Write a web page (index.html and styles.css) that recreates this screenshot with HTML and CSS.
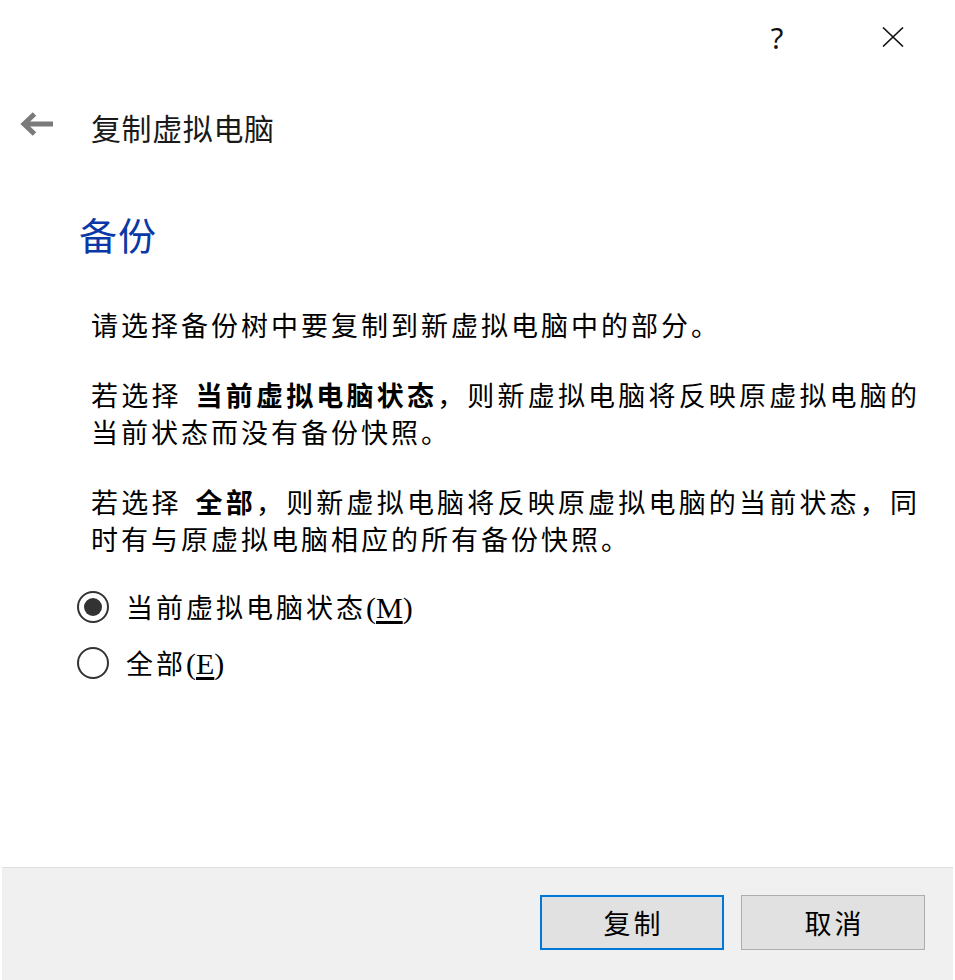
FILE: index.html
```html
<!DOCTYPE html>
<html lang="zh-CN">
<head>
<meta charset="utf-8">
<title>复制虚拟电脑</title>
<link rel="stylesheet" href="styles.css">
</head>
<body>
<div class="window">
  <div class="titlebar">
    <button class="cap-btn help" type="button">?</button>
    <button class="cap-btn close" type="button" aria-label="关闭">
      <svg width="22" height="20" viewBox="0 0 22 20"><path d="M1 0.5 L21 19.5 M21 0.5 L1 19.5" stroke="#111" stroke-width="1.6" fill="none"/></svg>
    </button>
  </div>
  <div class="header">
    <svg class="back" width="34" height="30" viewBox="0 0 34 30"><path d="M7 12 H33" stroke="#7a7a7a" stroke-width="5" fill="none"/><path d="M14.5 2 L4 12 L14.5 22" stroke="#7a7a7a" stroke-width="5" fill="none" stroke-linejoin="miter"/></svg>
    <span class="title">复制虚拟电脑</span>
  </div>
  <div class="content">
    <h1 class="heading">备份</h1>
    <p class="para">请选择备份树中要复制到新虚拟电脑中的部分。</p>
    <p class="para">若选择<b class="em">当前虚拟电脑状态</b>，则新虚拟电脑将反映原虚拟电脑的当前状态而没有备份快照。</p>
    <p class="para">若选择<b class="em">全部</b>，则新虚拟电脑将反映原虚拟电脑的当前状态，同时有与原虚拟电脑相应的所有备份快照。</p>
    <div class="radios">
      <label class="radio checked"><span class="dot"></span><span class="label">当前虚拟电脑状态<span class="acc">(<u>M</u>)</span></span></label>
      <label class="radio"><span class="dot"></span><span class="label">全部<span class="acc">(<u>E</u>)</span></span></label>
    </div>
  </div>
  <div class="footer">
    <button class="btn primary" type="button">复制</button>
    <button class="btn" type="button">取消</button>
  </div>
</div>
</body>
</html>
```
FILE: styles.css
```css
html, body {
  margin: 0;
  padding: 0;
  background: #fff;
}
body {
  font-family: "Noto Sans CJK SC", "Noto Sans", sans-serif;
  color: #000;
}
.window {
  width: 955px;
  height: 980px;
  display: flex;
  flex-direction: column;
  background: #fff;
  overflow: hidden;
}
.titlebar {
  height: 74px;
  display: flex;
  justify-content: flex-end;
  align-items: center;
  padding-right: 32px;
  gap: 55px;
}
.cap-btn {
  width: 60px;
  height: 60px;
  border: 0;
  background: transparent;
  padding: 0;
  display: flex;
  align-items: center;
  justify-content: center;
  color: #111;
}
.help {
  font-family: "Noto Sans", sans-serif;
  font-size: 29px;
  line-height: 1;
  padding-right: 2px;
}
.header {
  margin-top: 25px;
  height: 56px;
  display: flex;
  align-items: center;
  padding-left: 20px;
}
.back {
  display: block;
  margin-right: 37px;
}
.title {
  font-size: 30px;
  letter-spacing: 0.6px;
  color: #1a1a1a;
  line-height: 56px;
}
.content {
  padding-left: 79px;
}
.heading {
  margin: 54px 0 0 0;
  font-weight: normal;
  font-size: 38px;
  letter-spacing: 1px;
  line-height: 50px;
  color: #0a38a6;
}
.para {
  margin: 47px 0 0 12px;
  width: 829px;
  font-size: 27px;
  letter-spacing: 3px;
  line-height: 37px;
  text-align: justify;
  color: #000;
}
.para + .para {
  margin-top: 33px;
}
.em {
  font-weight: bold;
  margin-left: 14px;
}
.radios {
  margin-top: 30px;
  display: flex;
  flex-direction: column;
  gap: 16px;
}
.radio {
  height: 40px;
  display: flex;
  align-items: center;
}
.dot {
  width: 28px;
  height: 28px;
  border: 2.5px solid #333;
  border-radius: 50%;
  display: flex;
  align-items: center;
  justify-content: center;
  margin-left: -2px;
}
.radio.checked .dot::after {
  content: "";
  width: 18px;
  height: 18px;
  border-radius: 50%;
  background: #333;
}
.label {
  margin-left: 17px;
  font-size: 27px;
  letter-spacing: 3px;
  line-height: 40px;
}
.acc {
  font-family: "Liberation Serif", serif;
  font-size: 30px;
  letter-spacing: 0;
}
.acc u {
  text-underline-offset: 3px;
}
.footer {
  margin: auto 2px 0 2px;
  border-top: 1px solid #dfdfdf;
  background: #f0f0f0;
  display: flex;
  justify-content: flex-end;
  align-items: flex-start;
  padding: 27px 28px 0 0;
  gap: 17px;
  box-sizing: border-box;
  height: 113px;
}
.btn {
  width: 184px;
  height: 55px;
  box-sizing: border-box;
  border: 1px solid #adadad;
  background: #e1e1e1;
  font-family: "Noto Sans CJK SC", sans-serif;
  font-size: 27px;
  letter-spacing: 3px;
  padding: 0 0 0 3px;
  color: #000;
  display: flex;
  align-items: center;
  justify-content: center;
}
.btn.primary {
  border: 2px solid #0078d7;
}
```
